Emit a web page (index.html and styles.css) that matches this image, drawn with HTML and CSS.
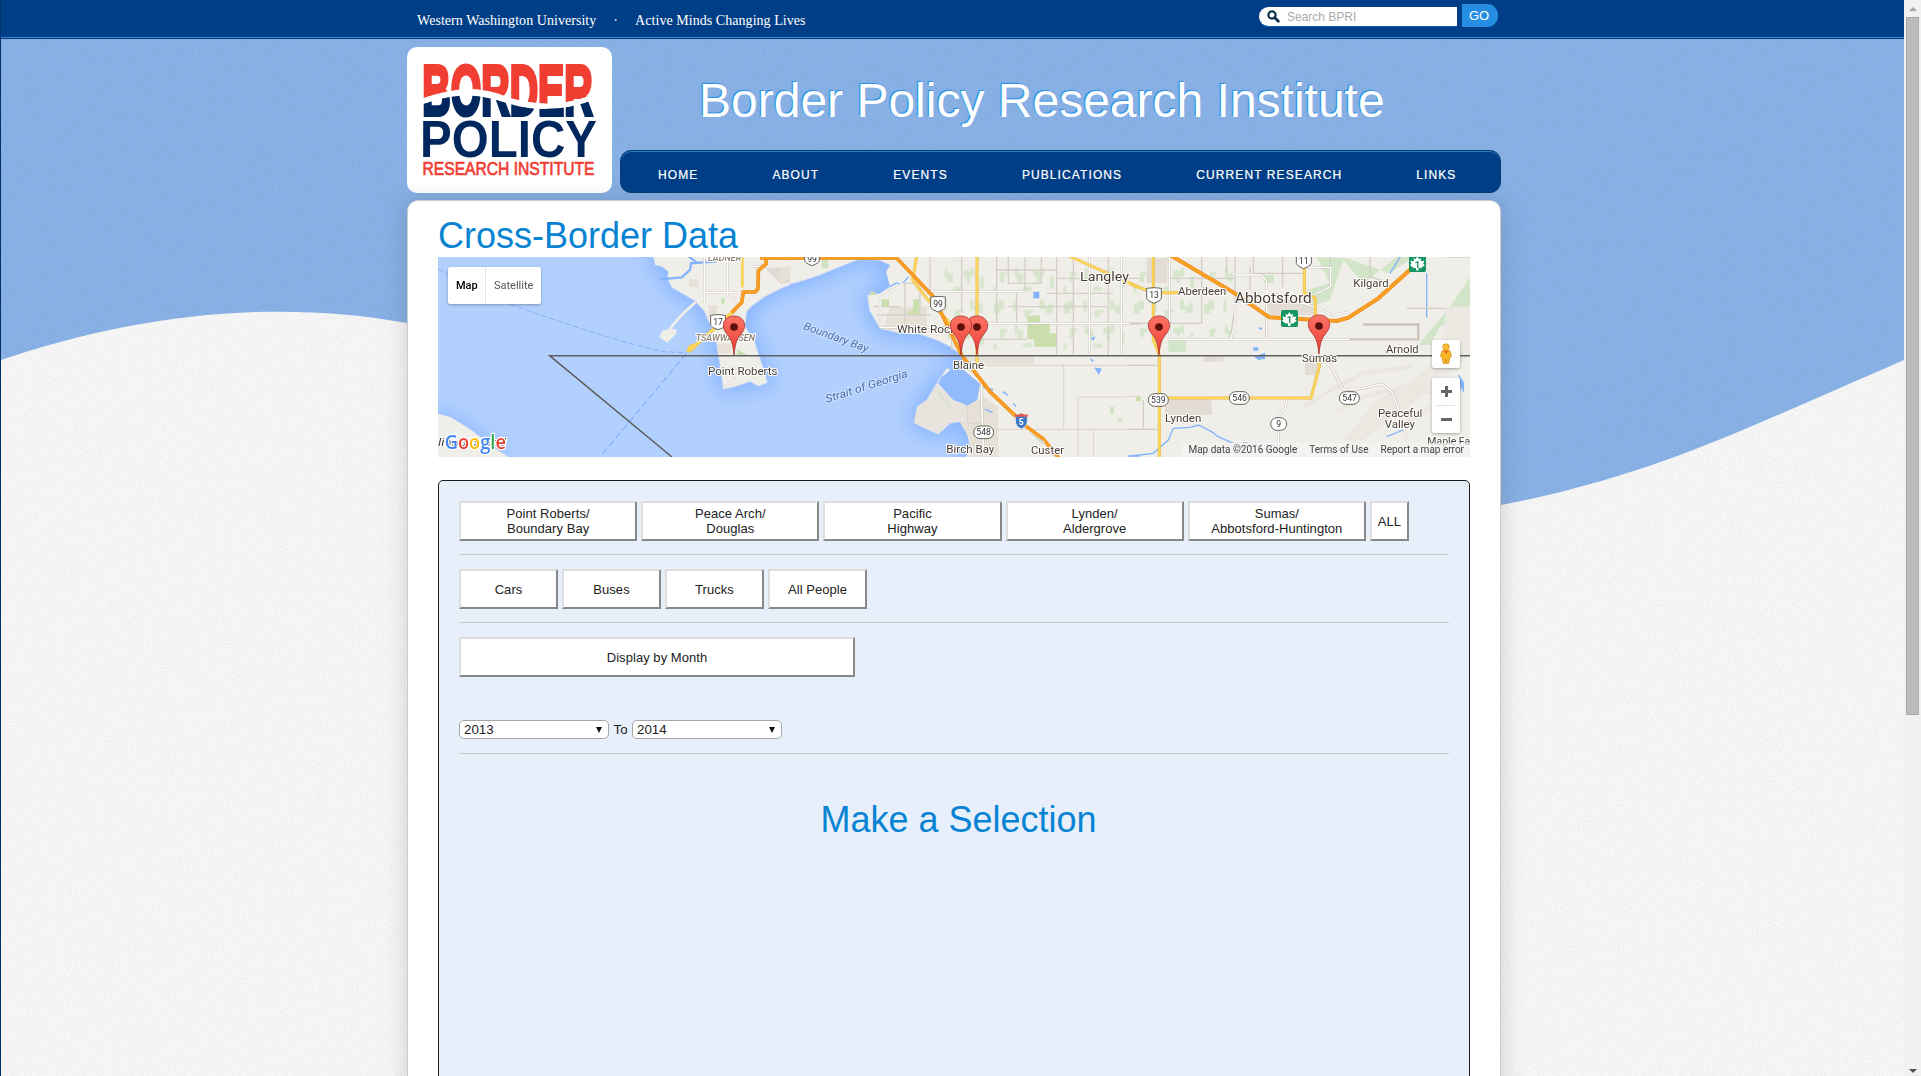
FILE: index.html
```html
<!DOCTYPE html>
<html lang="en">
<head>
<meta charset="utf-8">
<title>Cross-Border Data | Border Policy Research Institute</title>
<link rel="stylesheet" href="styles.css">
</head>
<body>
<div class="viewport">
<div class="page">
  <svg class="backdrop" viewBox="0 0 1903 1076" aria-hidden="true">
    <defs>
      <filter id="grain" x="0" y="0" width="100%" height="100%">
        <feTurbulence type="fractalNoise" baseFrequency="0.55" numOctaves="2" seed="4"/>
        <feColorMatrix values="0 0 0 0 0  0 0 0 0 0  0 0 0 0 0  .08 0 0 0 -.02"/>
      </filter>
    </defs>
    <rect width="1903" height="1076" fill="#f9f9f9"/>
    <path d="M0 0H1903V360C1850 383 1810 401 1765 420C1680 457 1600 486 1500 505C1150 560 760 400 406 323C270 298 130 316 0 360Z" fill="#8ab3e8"/>
    <rect width="1903" height="1076" filter="url(#grain)"/>
  </svg>

  <header class="topbar">
    <div class="topbar-inner">
      <nav class="wwu"><a>Western Washington University</a><span>·</span><a>Active Minds Changing Lives</a></nav>
      <form class="search">
        <label class="search-box">
          <svg width="13" height="13" viewBox="0 0 13 13"><circle cx="5" cy="5" r="3.6" fill="none" stroke="#0b2f45" stroke-width="2.2"/><path d="M7.6 7.6L11.3 11.3" stroke="#0b2f45" stroke-width="2.8" stroke-linecap="round"/></svg>
          <span>Search BPRI</span>
        </label>
        <button type="button" class="go">GO</button>
      </form>
    </div>
  </header>

  <div class="masthead">
    <a class="logo">
      <svg width="205" height="146" viewBox="407 47 205 146" role="img" aria-label="Border Policy Research Institute">
        <defs>
          <clipPath id="above"><path d="M407 47H612V88L593.500 94Q573 103 548 103.500Q530 103 510 98Q490 89 469 88.700Q450 89 423 98L407 104Z"/></clipPath>
          <clipPath id="below"><path d="M407 110L423.500 104Q446 95.500 469 95.500Q486 96 510 104Q528 109.500 545 109Q570 109 593.500 100L612 95V118H407Z"/></clipPath>
        </defs>
        <g class="logo-border" clip-path="url(#above)" fill="#f03e33" stroke="#f03e33"><text transform="translate(422.300 115) scale(.8 1.400)" textLength="213" lengthAdjust="spacingAndGlyphs">BORDER</text></g>
        <g class="logo-border" clip-path="url(#below)" fill="#00285e" stroke="#00285e"><text transform="translate(422.300 115) scale(.8 1.400)" textLength="213" lengthAdjust="spacingAndGlyphs">BORDER</text></g>
        <text class="logo-policy" x="420" y="157" textLength="177" lengthAdjust="spacingAndGlyphs">POLICY</text>
        <text class="logo-ri" x="422.500" y="175" textLength="172" lengthAdjust="spacingAndGlyphs">RESEARCH INSTITUTE</text>
      </svg>
    </a>
    <div class="mast-right">
      <div class="site-title">Border Policy Research Institute</div>
      <nav class="mainnav">
        <a>HOME</a><a>ABOUT</a><a>EVENTS</a><a>PUBLICATIONS</a><a>CURRENT RESEARCH</a><a>LINKS</a>
      </nav>
    </div>
  </div>

  <main class="content">
    <h1>Cross-Border Data</h1>
    <div class="map">
      <svg width="1032" height="200" viewBox="0 0 3096 600">
        <defs>
          <filter id="shore" x="-10%" y="-30%" width="120%" height="160%"><feGaussianBlur stdDeviation="30"/></filter>
          <pattern id="farms" width="210" height="170" patternUnits="userSpaceOnUse">
            <path d="M12 20h14v-9h16v26h-12v14h-18zM70 12h10v32h-10zM104 40h26v8h-10v14h-16zM150 10h12v18h16v-9h10v30h-22v-10h-16zM30 96h20v10h-8v20h-12zM74 84h9v16h16v26h-16v-14h-9zM130 92h22v-8h10v24h-12v20h-10v-18h-10zM180 110h12v34h-12zM10 140h9v18h-9zM100 140h24v12h-24z" fill="#cfe3c4"/>
          </pattern>
          <linearGradient id="pin" x1="0" y1="0" x2="0" y2="1"><stop offset="0" stop-color="#fd7468"/><stop offset="1" stop-color="#ea3b30"/></linearGradient>
          <g id="marker"><path d="M0 0C-4-40-10-50-22-64C-42-88-30-117 0-117C30-117 42-88 22-64C10-50 4-40 0 0Z" fill="url(#pin)" stroke="#a8322a" stroke-width="2.500"/><circle cy="-84" r="11.500" fill="#5c100c"/></g>
          <path id="land-main" d="M-10 140L50 128L120 105L170 84L230 60L255 57L300 62L330 75L318 95L330 140L300 160L262 165L268 210L300 265L350 278L420 283L470 300L510 320L545 346L560 395L598 430L592 480L562 498L520 480L475 430L512 388L500 385L470 430L440 480L412 500L402 548L440 567L475 582L510 550L540 545L560 575L570 620L555 660H2100V40H-10V140Z"/>
          <path id="land-west" d="M668 160L675 195L695 200L715 215L712 235L725 262L795 303L822 332L845 385L862 440L870 500L880 568L915 560L960 545L985 558L1012 548L1000 505L975 430L945 378L950 335L965 318L1005 290L1060 262L1080 255V160Z"/>
          <path id="land-sw" d="M0 635L60 650L125 690L180 735L240 775H0Z"/>
          <path id="maple" d="M0-17L4-10L9-12L8-5L17-6L14 1L18 4L9 11H3V17H-3V11H-9L-18 4L-14 1L-17-6L-8-5L-9-12L-4-10Z" fill="#fff"/>
        </defs>
        <rect width="3096" height="600" fill="#b2d0fe"/>
        <g filter="url(#shore)" fill="#86b4ff" stroke="#86b4ff" stroke-width="30">
          <use href="#land-main" x="1026" y="-51"/><use href="#land-west" x="-24" y="-171"/><use href="#land-sw" x="-24" y="-171" stroke-width="6"/>
        </g>
        <g fill="#f0eee9">
          <use href="#land-main" x="1026" y="-51"/><use href="#land-west" x="-24" y="-171"/><use href="#land-sw" x="-24" y="-171"/>
        </g>

        <!-- Delta, Tsawwassen and Point Roberts -->
        <g transform="translate(-24 -171)" fill="none">
          <path d="M718 385L740 390L738 402L712 428L688 412L695 395Z" fill="#f0eee9"/>
          <path d="M718 390Q750 345 797 307" stroke="#f0eee9" stroke-width="8"/>
          <path d="M690 238L755 232L780 210L783 190L860 184M765 160L800 188" stroke="#82b3ff" stroke-width="7"/>
          <path d="M1005 205L1080 200V250H1050Z" fill="#dfdad6"/><path d="M778 238h28v24h-28zM835 315h26v36h-26zM862 430h40v30h-40z" fill="#e6e0d9"/>
          <path d="M875 295h8v18h-8zM922 448L950 465H922Z" fill="#c5e0b3"/>
          <path d="M823 171V310M818 278H940M892 171V290L915 296V345M960 200H1010M912 500L914 540L880 562M912 540L928 556" stroke="#d2ccc3" stroke-width="7"/>
          <path d="M823 171V310M818 278H940M892 171V290L915 296V345M960 200H1010M912 500L914 540L880 562M912 540L928 556" stroke="#fff" stroke-width="3.500"/>
          <path d="M937 160V262" stroke="#fbd355" stroke-width="8"/>
          <path d="M912 332L775 455" stroke="#e0b63a" stroke-width="10"/><path d="M912 332L775 455" stroke="#fcd55a" stroke-width="8"/><path d="M768 455L778 436L796 430L802 436L790 450Z" fill="#fcd55a" stroke="#e0b63a"/>
          <path d="M905 338L935 308L940 276H975L984 266L985 212L1008 192V160M1050 173H1100" stroke="#e8890f" stroke-width="11"/><path d="M905 338L935 308L940 276H975L984 266L985 212L1008 192V160M1050 173H1100" stroke="#fa9e25" stroke-width="8"/>
          <path d="M24 207L60 225M240 312Q520 415 700 455L770 458" stroke="#82b1ff" stroke-width="3" stroke-dasharray="17 8"/>
          <path d="M770 460L510 771" stroke="#82b1ff" stroke-width="3.500" stroke-dasharray="22 9"/>
        </g>

        <!-- Surrey to Langley, Blaine and Birch Bay -->
        <g transform="translate(1026 -51)" fill="none">
          <path d="M470 60H1050V345H545L470 300Z" fill="url(#farms)" opacity=".8"/>
          <path d="M0 80L32 82V110L0 135ZM330 200H440V270H310ZM545 350H763V372H600ZM562 497L610 470L655 500V655H565L570 600L540 545L562 540Z" fill="#e6e0d6"/>
          <path d="M470 435L500 455L560 498V545H540L510 548L475 582L440 566L402 548L412 500L440 480Z" fill="#e8e3dc"/>
          <path d="M475 430L485 410L520 385L560 402L600 432L590 480L562 496L520 480Z" fill="#91bbfd"/>
          <path d="M305 178h22v24h-22zM375 225L400 205V178H418V225ZM742 228L780 226V250H810V280H828V320H762V298H742ZM270 155h16v10h-16zM1068 470h14v14h-14z" fill="#cadfab"/>
          <path d="M990 500h12v20h-12zM1014 535h12v10h-12zM125 60h20v25h-20z" fill="#cfe3c4"/>
          <path d="M760 155h18v20h-18zM932 295l14-6-6 14zM930 355l12 6-6 6zM942 382l24 4-10 18z" fill="#81b3ff"/>
          <path d="M668 455L684 466M700 490L708 500M615 508L638 518M330 140L350 128L365 135L385 110M1045 648H1080M605 440L640 450" stroke="#81b3ff" stroke-width="4"/>
          <path d="M300 175L300 262H600M300 175L370 130H420V225M450 51V155H735V51M685 51V130H784V51M280 200H360M290 225H450M830 51V345M880 51V345M985 51V345M545 51V215M650 51V250M375 130V265M685 200H985M830 115H1080M800 160H1000M600 298H740M515 240V330M710 155V250M650 90H830" stroke="#d5cfc7" stroke-width="4"/>
          <path d="M300 262H600M600 250H1080M450 155H735M928 51V345M1024 51V345M300 175L370 130M300 175V262" stroke="#ccc5bd" stroke-width="7"/><path d="M300 262H600M600 250H1080M450 155H735M928 51V345M1024 51V345M300 175L370 130M300 175V262" stroke="#fff" stroke-width="4"/>
          <path d="M610 376H1080M851 376V568M640 568H1080M894 655V471H1030L1080 468M940 568V655M562 498V550H612" stroke="#d9d3ca" stroke-width="3"/>
          <path d="M545 380L605 430V495L612 655" stroke="#cbc4bb" stroke-width="9"/><path d="M545 380L605 430V495L612 655" stroke="#fff" stroke-width="5"/>
          <path d="M410 51L398 120L440 175L520 260M591 51V370M860 45L1080 143" stroke="#e3b94d" stroke-width="9"/><path d="M410 51L398 120L440 175L520 260M591 51V370M860 45L1080 143" stroke="#fcd55a" stroke-width="6.500"/>
          <path d="M-60 54H350L460 170L545 345L630 455L740 560L790 597L840 658" stroke="#e8890f" stroke-width="11"/><path d="M-60 54H350L460 170L545 345L630 455L740 560L790 597L840 658" stroke="#fa9e25" stroke-width="8"/>
          <path d="M745 575L795 605L790 615Z" fill="#d5d8c4"/><path d="M473 450L490 480L505 485V510" stroke="#cfe3c4" stroke-width="4"/>
        </g>

        <!-- Abbotsford, Sumas and Lynden -->
        <g transform="translate(2076 -51)" fill="none">
          <path d="M0 51H310V290H0Z" fill="url(#farms)" opacity=".8"/>
          <path d="M50 55H112V128H50ZM400 180H560V225H420ZM105 478H245V525H105ZM525 365H568V405H525ZM220 345h60v20h-60z" fill="#e3dcd5"/>
          <path d="M560 51L650 55L780 100L850 51H800L700 130L640 60L600 180L540 200L530 150L600 130ZM865 315L960 200L1020 110V200L930 260L900 315ZM115 300h52v36h-52zM400 105h32v24h-32z" fill="#d3e5c8"/>
          <path d="M950 200H1020V345L860 480L700 600H640L740 480L850 420L930 345Z" fill="#ebe8e2"/>
          <path d="M520 500L620 440L700 400L850 380M700 470L830 440L905 460M800 570L900 500M620 510L700 475" stroke="#eae7e0" stroke-width="13"/>
          <path d="M810 51L780 100M890 100V232M985 405L1000 430V455" stroke="#81b3ff" stroke-width="4"/><path d="M988 405L1003 430L992 455Z" fill="#81b3ff"/>
          <path d="M370 322h15v10h-15zM372 350L405 338V356L385 360ZM382 262l16 2-6 6z" fill="#81b3ff"/>
          <path d="M0 648L70 640L115 600L130 565L180 562L205 555L245 575L265 590L310 610M770 590L820 570" stroke="#81b3ff" stroke-width="4"/>
          <path d="M315 51V200L300 300M215 51V250H120M408 200V300M458 51V140M0 250H215M120 115H315M600 51V80M290 51V100M360 80V150M720 51V110L780 130M865 250V300M700 255H865M370 51V100H520M0 376H85M0 568H85M40 480V568M950 51H1020M830 205H950" stroke="#d3cdc5" stroke-width="4"/>
          <path d="M118 51V298H865V253H700M315 105H395L410 125V298M315 190L395 150L550 200L610 225L660 215M550 165L602 140V82H520M315 190V250L302 298" stroke="#ccc5bd" stroke-width="7"/><path d="M118 51V298H660M315 105H395L410 125V298M315 190L395 150L550 200L610 225L660 215M550 165L602 140V82H520M315 190V250L302 298" stroke="#fff" stroke-width="4"/>
          <path d="M568 375H600L640 450L700 445L755 432L785 455L810 520L832 600M472 475L465 505L445 530V610" stroke="#cbc4bb" stroke-width="8"/><path d="M568 375H600L640 450L700 445L755 432L785 455L810 520L832 600M472 475L465 505L445 530V610" stroke="#fff" stroke-width="4.500"/>
          <path d="M0 132L70 158H145M70 51V300L88 345V655M88 474H543L568 380V345M523 80V160L556 175V240" stroke="#e3b94d" stroke-width="9"/><path d="M0 132L70 158H145M70 51V300L88 345V655M88 474H543L568 380V345M523 80V160L556 175V240" stroke="#fcd55a" stroke-width="6.500"/>
          <path d="M120 45L310 157L418 232L620 243L655 233L745 175L850 80" stroke="#e8890f" stroke-width="12"/><path d="M120 45L310 157L418 232L620 243L655 233L745 175L850 80" stroke="#fa9e25" stroke-width="9"/>
        </g>

        <path d="M702 600L335 296H3096" fill="none" stroke="#5f5f5f" stroke-width="4.500"/>

        <!-- Highway shields -->
        <g fill="#fff" stroke="#66625d" stroke-width="3">
          <path d="M818 175Q840 170 862 175V205Q860 212 840 218Q820 212 818 205Z"/>
          <path d="M1100-20H1144V10Q1144 18 1122 26Q1100 18 1100 10Z"/>
          <path d="M1478 120Q1500 116 1522 120V150Q1520 158 1500 165Q1480 158 1478 150Z"/>
          <path d="M2126 94Q2148 90 2170 94V124Q2168 132 2148 139Q2128 132 2126 124Z"/>
          <path d="M2575-20H2620V20Q2616 28 2597 35Q2578 28 2575 20Z"/>
          <rect x="1607" y="507" width="60" height="38" rx="19"/><rect x="2131" y="410" width="60" height="38" rx="19"/><rect x="2374" y="404" width="60" height="38" rx="19"/><rect x="2704" y="404" width="60" height="38" rx="19"/><rect x="2498" y="482" width="48" height="38" rx="19"/>
        </g>
        <path d="M1732 478Q1750 470 1768 478V492Q1768 508 1750 516Q1732 508 1732 492Z" fill="#3d78c8" stroke="#fff" stroke-width="2"/><path d="M1731 470L1738 474L1750 469L1762 474L1769 470V479H1731Z" fill="#dc5a50"/>
        <g fill="#159464"><rect x="2529" y="159" width="51" height="51" rx="5"/><rect x="2913" y="-8" width="51" height="53" rx="5"/></g>
        <use href="#maple" transform="translate(2554 186) scale(1.250)"/><use href="#maple" transform="translate(2938 19) scale(1.250)"/>
        <g class="shield-no">
          <text x="840" y="204">17</text><text x="1122" y="14">99</text><text x="1500" y="150">99</text><text x="2148" y="123">13</text><text x="2597" y="20">11</text><text x="1637" y="535">548</text><text x="2161" y="438">539</text><text x="2405" y="432">546</text><text x="2735" y="432">547</text><text x="2522" y="510">9</text>
          <text class="on-blue" x="1750" y="505">5</text><text class="on-green" x="2554" y="198">1</text><text class="on-green" x="2938" y="32">1</text>
        </g>

        <!-- Place names -->
        <g class="places">
          <text class="area" x="810" y="13" textLength="100" lengthAdjust="spacingAndGlyphs">LADNER</text>
          <text class="area" x="773" y="252" textLength="178" lengthAdjust="spacingAndGlyphs">TSAWWASSEN</text>
          <text x="810" y="353" textLength="208" lengthAdjust="spacingAndGlyphs">Point Roberts</text>
          <text x="1377" y="229" textLength="178" lengthAdjust="spacingAndGlyphs">White Rock</text>
          <text x="1545" y="336" textLength="93" lengthAdjust="spacingAndGlyphs">Blaine</text>
          <text x="1525" y="588" textLength="144" lengthAdjust="spacingAndGlyphs">Birch Bay</text>
          <text x="1779" y="590" textLength="99" lengthAdjust="spacingAndGlyphs">Custer</text>
          <text class="city" x="1926" y="72" textLength="147" lengthAdjust="spacingAndGlyphs">Langley</text>
          <text x="2220" y="113" textLength="145" lengthAdjust="spacingAndGlyphs">Aberdeen</text>
          <text class="city big" x="2391" y="138" textLength="230" lengthAdjust="spacingAndGlyphs">Abbotsford</text>
          <text x="2746" y="89" textLength="106" lengthAdjust="spacingAndGlyphs">Kilgard</text>
          <text x="2844" y="287" textLength="98" lengthAdjust="spacingAndGlyphs">Arnold</text>
          <text x="2592" y="315" textLength="105" lengthAdjust="spacingAndGlyphs">Sumas</text>
          <text x="2181" y="494" textLength="109" lengthAdjust="spacingAndGlyphs">Lynden</text>
          <text x="2820" y="480" textLength="133" lengthAdjust="spacingAndGlyphs">Peaceful</text>
          <text x="2840" y="513" textLength="91" lengthAdjust="spacingAndGlyphs">Valley</text>
          <text x="2968" y="565" textLength="160" lengthAdjust="spacingAndGlyphs">Maple Falls</text>
          <text class="faded" x="2412" y="580" textLength="120" lengthAdjust="spacingAndGlyphs">Everson</text>
          <text class="water" transform="translate(1094 216) rotate(20)" textLength="205" lengthAdjust="spacingAndGlyphs">Boundary Bay</text>
          <text class="water" transform="translate(1166 438) rotate(-18)" textLength="258" lengthAdjust="spacingAndGlyphs">Strait of Georgia</text>
          <text class="island" x="0" y="568" textLength="204" lengthAdjust="spacingAndGlyphs">liano Island</text>
        </g>
        <use href="#marker" x="888" y="294"/><use href="#marker" x="1617" y="294"/><use href="#marker" x="1569" y="294"/><use href="#marker" x="2163" y="294"/><use href="#marker" x="2643" y="291"/>
        <g class="google"><text y="577" textLength="184" lengthAdjust="spacingAndGlyphs" x="20"><tspan fill="#4285f4">G</tspan><tspan fill="#ea4335">o</tspan><tspan fill="#fbbc05">o</tspan><tspan fill="#4285f4">g</tspan><tspan fill="#34a853">l</tspan><tspan fill="#ea4335">e</tspan></text></g>
      </svg>
      <div class="map-type"><b>Map</b><span>Satellite</span></div>
      <div class="map-controls">
        <div class="pegman"><svg width="14" height="22" viewBox="0 0 14 22"><path d="M3 8Q7 6 11 8L12.500 13L11 14.500L9.500 20.500H7.600L7 16L6.400 20.500H4.500L3 14.500L1.500 13Z" fill="#f9b528" stroke="#d68a18" stroke-width=".8"/><circle cx="7" cy="4" r="3.200" fill="#fbbf35" stroke="#d68a18" stroke-width=".8"/><path d="M4.500 8L7 11L9.500 8Z" fill="#e96828"/></svg></div>
        <div class="zoom"><svg width="28" height="56" viewBox="0 0 28 56"><path d="M9 13.500H20M14.500 8V19M9 41.500H20" stroke="#666" stroke-width="3"/><path d="M4 27.500H23" stroke="#e2e2e2"/></svg></div>
      </div>
      <div class="map-legal"><span>Map data ©2016 Google</span><span>Terms of Use</span><span>Report a map error</span></div>
    </div>

    <section class="panel">
      <div class="row">
        <button class="port">Point Roberts/<br>Boundary Bay</button><button class="port">Peace Arch/<br>Douglas</button><button class="port">Pacific<br>Highway</button><button class="port">Lynden/<br>Aldergrove</button><button class="port">Sumas/<br>Abbotsford-Huntington</button><button class="all">ALL</button>
      </div>
      <div class="row">
        <button class="mode">Cars</button><button class="mode">Buses</button><button class="mode">Trucks</button><button class="mode">All People</button>
      </div>
      <div class="row dates">
        <button class="month">Display by Month</button>
        <div class="years"><span class="year">2013</span><span>To</span><span class="year">2014</span></div>
      </div>
      <h2>Make a Selection</h2>
    </section>
  </main>
</div>
<div class="scrollbar"><i class="up"></i><div class="thumb"></div><i class="down"></i></div>
</div>
</body>
</html>
```
FILE: styles.css
```css
* { box-sizing: border-box; }
body { margin: 0; background: #00336e; font-family: "Liberation Sans", Arial, sans-serif; color: #222; }
.viewport { display: flex; height: 1076px; overflow: hidden; padding-left: 1px; }
.page { position: relative; width: 1903px; height: 1076px; overflow: hidden; isolation: isolate; }
.backdrop { position: absolute; inset: 0; width: 1903px; height: 1076px; z-index: -1; }

.topbar { height: 39px; background: #003f87; border-bottom: 1px solid #003a70; box-shadow: inset 0 -1px #3a8dd4; }
.topbar-inner { display: flex; justify-content: space-between; width: 1094px; margin-left: 406px; padding: 0 3px 0 10px; }
.wwu { display: flex; gap: 17px; padding-top: 12px; font: 14px/17px "Liberation Serif", serif; letter-spacing: .05px; color: #fff; }
.search { display: flex; align-items: flex-start; gap: 5px; padding-top: 4px; margin: 0; }
.search-box { display: flex; align-items: center; gap: 7px; width: 198px; height: 19px; margin-top: 3px; padding-left: 8px; background: #fff; border-radius: 10px 0 0 10px; box-shadow: 0 1px #1464ad; font-size: 12px; color: #aaa; }
.go { width: 36px; height: 23px; padding: 0 2px 0 0; border: 0; border-radius: 0 11px 11px 0; background: #258de2; color: #fff; font: 13px "Liberation Sans", sans-serif; }

.masthead { display: flex; gap: 8px; width: 1094px; height: 146px; margin: 8px 0 0 406px; }
.logo { width: 205px; height: 146px; border-radius: 10px; background: linear-gradient(#fff 92%, #f8f8f8); }
.logo svg { display: block; }
.logo-border { font: bold 50px "Liberation Sans", sans-serif; stroke-width: 3px; }
.logo-policy { font: bold 51px "Liberation Sans", sans-serif; fill: #00285e; }
.logo-ri { font: 18px "Liberation Sans", sans-serif; fill: #f03e33; stroke: #f03e33; stroke-width: .7px; }
.mast-right { display: flex; flex-direction: column; justify-content: space-between; flex: 1; }
.site-title { padding: 26px 0 0 79px; font-size: 48px; line-height: 55px; color: #fff; text-shadow: -1px -1px 1px #258de2; white-space: nowrap; }
.mainnav { display: flex; gap: 74px; height: 43px; padding: 5px 0 0 37px; border-radius: 11px; background: #003f87; border: 1px solid #003a70; box-shadow: inset 0 1px #2b7cc0; font-size: 12px; line-height: 38px; letter-spacing: 1.1px; color: #fff; -webkit-text-stroke: .2px #fff; }
.mainnav a { white-space: nowrap; }

.content { width: 1094px; height: 1000px; margin: 7px 0 0 406px; padding: 14px 30px 0; background: #fff; border: 1px solid #ccc; border-radius: 11px; box-shadow: 0 0 26px rgba(0, 0, 0, .15); }
h1, h2 { margin: 0; font-weight: normal; font-size: 36px; line-height: 42px; color: #0783d3; }
.map { position: relative; width: 1032px; height: 200px; overflow: hidden; }
.map > svg { display: block; }
.map text { font-family: Roboto, sans-serif; }
.places text { font-size: 33px; fill: #463e36; stroke: #fff; stroke-width: 6px; stroke-linejoin: round; paint-order: stroke; }
.places .city { font-size: 39px; }
.places .big { font-size: 44px; }
.places .area { font-size: 25px; font-style: italic; font-weight: 500; fill: #8d8071; }
.places .water { font-size: 33px; font-style: italic; fill: #4c6fa8; stroke: #cfe1ff; }
.places .faded { fill: #aaa; }
.places .island { font-style: italic; }
.shield-no text { font-size: 26px; text-anchor: middle; fill: #333; }
.shield-no .on-blue { fill: #fff; font-weight: bold; }
.shield-no .on-green { font-size: 28px; fill: #159464; font-weight: bold; }
.google text { font: 600 59px "Open Sans", sans-serif; stroke: #fff; stroke-width: 7px; paint-order: stroke; }
.map-type { position: absolute; left: 10px; top: 10px; display: flex; width: 93px; height: 37px; background: #fff; border-radius: 2px; box-shadow: 0 1px 3px rgba(0, 0, 0, .3); font: 11px/37px Roboto, sans-serif; color: #565656; }
.map-type b { width: 38px; padding-left: 8px; font-weight: 500; color: #000; border-right: 1px solid #e6e6e6; }
.map-type span { padding-left: 8px; }
.map-controls { position: absolute; right: 10px; top: 83px; display: flex; flex-direction: column; gap: 10px; }
.pegman, .zoom { width: 28px; background: #fff; border-radius: 2px; box-shadow: 0 1px 3px rgba(0, 0, 0, .3); }
.pegman { height: 28px; padding: 3px 7px; }
.zoom { height: 55px; }
.map-legal { position: absolute; right: 0; bottom: 0; display: flex; height: 14px; font: 10px/14px Roboto, sans-serif; color: #444; background: rgba(245, 245, 245, .7); white-space: nowrap; }
.map-legal span { padding: 0 6px; }

.panel { width: 1032px; height: 700px; margin-top: 23px; padding: 20px; border: 1px solid #1b1b1b; border-radius: 5px; background: #e7effa; }
.row { display: flex; gap: 4px; height: 54px; margin-bottom: 14px; border-bottom: 1px solid #c9c9c9; }
.row button { height: 40px; padding: 0; border: 2px solid; border-color: #ddd #888 #888 #ddd; background: #fff; color: #222; font: 13px/15px "Liberation Sans", sans-serif; letter-spacing: .05px; white-space: nowrap; }
.row .port { width: 178.2px; }
.row .all { width: 39px; letter-spacing: 0; }
.row .mode { width: 99px; }
.row .month { width: 396px; }
.dates { flex-direction: column; gap: 43px; height: 117px; margin-bottom: 0; }
.years { display: flex; gap: 4.5px; align-items: center; font-size: 13.300px; line-height: 17px; }
.year { display: flex; align-items: center; justify-content: space-between; width: 150px; height: 19px; padding: 0 6px 0 4px; border: 1px solid #a6a6a6; border-radius: 5px; background: #fff; }
.year::after { content: ""; border: 3.500px solid transparent; border-top: 6px solid #111; border-bottom: 0; }
h2 { margin-top: 45px; padding-left: 9px; text-align: center; }

.scrollbar { display: flex; flex-direction: column; align-items: center; width: 17px; height: 1076px; background: #f1f1f1; }
.thumb { width: 13px; height: 698px; background: #bcbcbc; border: 1px solid #a8a8a8; }
.up, .down { border: 4px solid transparent; }
.up { margin: 7px 0 6px; border-top: 0; border-bottom-color: #a3a3a3; }
.down { margin-top: auto; margin-bottom: 3px; border-bottom: 0; border-top-color: #505050; }
```
